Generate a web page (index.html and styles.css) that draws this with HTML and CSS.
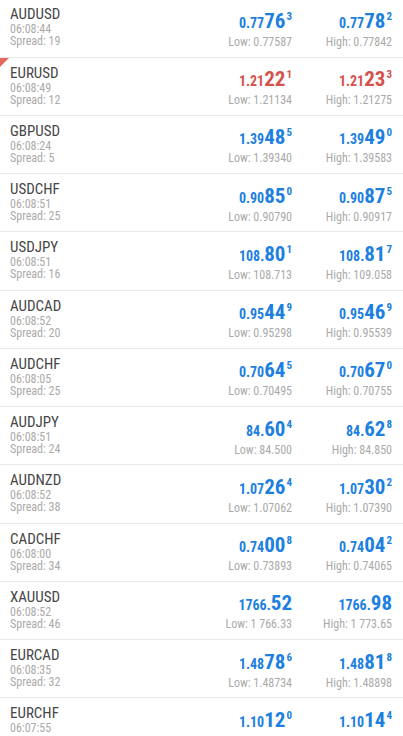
FILE: index.html
```html
<!DOCTYPE html>
<html lang="en">
<head>
    <meta charset="UTF-8">
    <meta name="viewport" content="width=device-width, initial-scale=1.0">
    <title>Quotes</title>
    <link rel="stylesheet" href="styles.css">
</head>
<body>
    <div class="quotes">

        <div class="row">
            <div class="sym">
                <div class="name">AUDUSD</div>
                <div class="info">06:08:44</div>
                <div class="info">Spread: 19</div>
            </div>
            <div class="price">
                <div class="val"><span class="sm">0.77</span><span class="big">76</span><span class="sup">3</span></div>
                <div class="range">Low: 0.77587</div>
            </div>
            <div class="price">
                <div class="val"><span class="sm">0.77</span><span class="big">78</span><span class="sup">2</span></div>
                <div class="range">High: 0.77842</div>
            </div>
        </div>

        <div class="row down">
            <div class="mark"></div>
            <div class="sym">
                <div class="name">EURUSD</div>
                <div class="info">06:08:49</div>
                <div class="info">Spread: 12</div>
            </div>
            <div class="price">
                <div class="val"><span class="sm">1.21</span><span class="big">22</span><span class="sup">1</span></div>
                <div class="range">Low: 1.21134</div>
            </div>
            <div class="price">
                <div class="val"><span class="sm">1.21</span><span class="big">23</span><span class="sup">3</span></div>
                <div class="range">High: 1.21275</div>
            </div>
        </div>

        <div class="row">
            <div class="sym">
                <div class="name">GBPUSD</div>
                <div class="info">06:08:24</div>
                <div class="info">Spread: 5</div>
            </div>
            <div class="price">
                <div class="val"><span class="sm">1.39</span><span class="big">48</span><span class="sup">5</span></div>
                <div class="range">Low: 1.39340</div>
            </div>
            <div class="price">
                <div class="val"><span class="sm">1.39</span><span class="big">49</span><span class="sup">0</span></div>
                <div class="range">High: 1.39583</div>
            </div>
        </div>

        <div class="row">
            <div class="sym">
                <div class="name">USDCHF</div>
                <div class="info">06:08:51</div>
                <div class="info">Spread: 25</div>
            </div>
            <div class="price">
                <div class="val"><span class="sm">0.90</span><span class="big">85</span><span class="sup">0</span></div>
                <div class="range">Low: 0.90790</div>
            </div>
            <div class="price">
                <div class="val"><span class="sm">0.90</span><span class="big">87</span><span class="sup">5</span></div>
                <div class="range">High: 0.90917</div>
            </div>
        </div>

        <div class="row">
            <div class="sym">
                <div class="name">USDJPY</div>
                <div class="info">06:08:51</div>
                <div class="info">Spread: 16</div>
            </div>
            <div class="price">
                <div class="val"><span class="sm">108.</span><span class="big">80</span><span class="sup">1</span></div>
                <div class="range">Low: 108.713</div>
            </div>
            <div class="price">
                <div class="val"><span class="sm">108.</span><span class="big">81</span><span class="sup">7</span></div>
                <div class="range">High: 109.058</div>
            </div>
        </div>

        <div class="row">
            <div class="sym">
                <div class="name">AUDCAD</div>
                <div class="info">06:08:52</div>
                <div class="info">Spread: 20</div>
            </div>
            <div class="price">
                <div class="val"><span class="sm">0.95</span><span class="big">44</span><span class="sup">9</span></div>
                <div class="range">Low: 0.95298</div>
            </div>
            <div class="price">
                <div class="val"><span class="sm">0.95</span><span class="big">46</span><span class="sup">9</span></div>
                <div class="range">High: 0.95539</div>
            </div>
        </div>

        <div class="row">
            <div class="sym">
                <div class="name">AUDCHF</div>
                <div class="info">06:08:05</div>
                <div class="info">Spread: 25</div>
            </div>
            <div class="price">
                <div class="val"><span class="sm">0.70</span><span class="big">64</span><span class="sup">5</span></div>
                <div class="range">Low: 0.70495</div>
            </div>
            <div class="price">
                <div class="val"><span class="sm">0.70</span><span class="big">67</span><span class="sup">0</span></div>
                <div class="range">High: 0.70755</div>
            </div>
        </div>

        <div class="row">
            <div class="sym">
                <div class="name">AUDJPY</div>
                <div class="info">06:08:51</div>
                <div class="info">Spread: 24</div>
            </div>
            <div class="price">
                <div class="val"><span class="sm">84.</span><span class="big">60</span><span class="sup">4</span></div>
                <div class="range">Low: 84.500</div>
            </div>
            <div class="price">
                <div class="val"><span class="sm">84.</span><span class="big">62</span><span class="sup">8</span></div>
                <div class="range">High: 84.850</div>
            </div>
        </div>

        <div class="row">
            <div class="sym">
                <div class="name">AUDNZD</div>
                <div class="info">06:08:52</div>
                <div class="info">Spread: 38</div>
            </div>
            <div class="price">
                <div class="val"><span class="sm">1.07</span><span class="big">26</span><span class="sup">4</span></div>
                <div class="range">Low: 1.07062</div>
            </div>
            <div class="price">
                <div class="val"><span class="sm">1.07</span><span class="big">30</span><span class="sup">2</span></div>
                <div class="range">High: 1.07390</div>
            </div>
        </div>

        <div class="row">
            <div class="sym">
                <div class="name">CADCHF</div>
                <div class="info">06:08:00</div>
                <div class="info">Spread: 34</div>
            </div>
            <div class="price">
                <div class="val"><span class="sm">0.74</span><span class="big">00</span><span class="sup">8</span></div>
                <div class="range">Low: 0.73893</div>
            </div>
            <div class="price">
                <div class="val"><span class="sm">0.74</span><span class="big">04</span><span class="sup">2</span></div>
                <div class="range">High: 0.74065</div>
            </div>
        </div>

        <div class="row">
            <div class="sym">
                <div class="name">XAUUSD</div>
                <div class="info">06:08:52</div>
                <div class="info">Spread: 46</div>
            </div>
            <div class="price">
                <div class="val"><span class="sm">1766.</span><span class="big">52</span></div>
                <div class="range">Low: 1 766.33</div>
            </div>
            <div class="price">
                <div class="val"><span class="sm">1766.</span><span class="big">98</span></div>
                <div class="range">High: 1 773.65</div>
            </div>
        </div>

        <div class="row">
            <div class="sym">
                <div class="name">EURCAD</div>
                <div class="info">06:08:35</div>
                <div class="info">Spread: 32</div>
            </div>
            <div class="price">
                <div class="val"><span class="sm">1.48</span><span class="big">78</span><span class="sup">6</span></div>
                <div class="range">Low: 1.48734</div>
            </div>
            <div class="price">
                <div class="val"><span class="sm">1.48</span><span class="big">81</span><span class="sup">8</span></div>
                <div class="range">High: 1.48898</div>
            </div>
        </div>

        <div class="row">
            <div class="sym">
                <div class="name">EURCHF</div>
                <div class="info">06:07:55</div>
            </div>
            <div class="price">
                <div class="val"><span class="sm">1.10</span><span class="big">12</span><span class="sup">0</span></div>
            </div>
            <div class="price">
                <div class="val"><span class="sm">1.10</span><span class="big">14</span><span class="sup">4</span></div>
            </div>
        </div>

    </div>
</body>
</html>
```

FILE: styles.css
```css
body {
    margin: 0;
    background: #fff;
    font-family: "Roboto Condensed", Roboto, sans-serif;
    font-stretch: condensed;
    overflow: hidden;
}

.quotes {
    margin-top: -0.75px;
}

/* Eine Zeile pro Symbol */
.row {
    position: relative;
    display: flex;
    height: 58.25px;
    box-sizing: border-box;
    padding: 7px 11px 0 10px;
    border-bottom: 1px solid #e9e9e9;
}

.sym {
    flex: 1;
}

.name {
    font-size: 15px;
    line-height: 17px;
    color: #464646;
}

.info {
    font-size: 12px;
    line-height: 12px;
    color: #aaa;
}

/* Bid / Ask */
.price {
    width: 100px;
    padding-top: 2.5px;
    text-align: right;
}

.val {
    font-weight: bold;
    line-height: 24px;
    color: #1d7fe0;
    white-space: nowrap;
}

.down .val {
    color: #d4524b;
}

.sm {
    font-size: 14px;
}

.big {
    font-size: 21px;
}

.sup {
    font-size: 11px;
    line-height: 1;
    vertical-align: 8px;
    margin-left: 1px;
}

.range {
    font-size: 12px;
    line-height: 14px;
    color: #aaa;
}

/* roter Marker oben links */
.mark {
    position: absolute;
    top: 0;
    left: 0;
    width: 0;
    height: 0;
    border-top: 9px solid #e3685d;
    border-right: 9px solid transparent;
}
```
